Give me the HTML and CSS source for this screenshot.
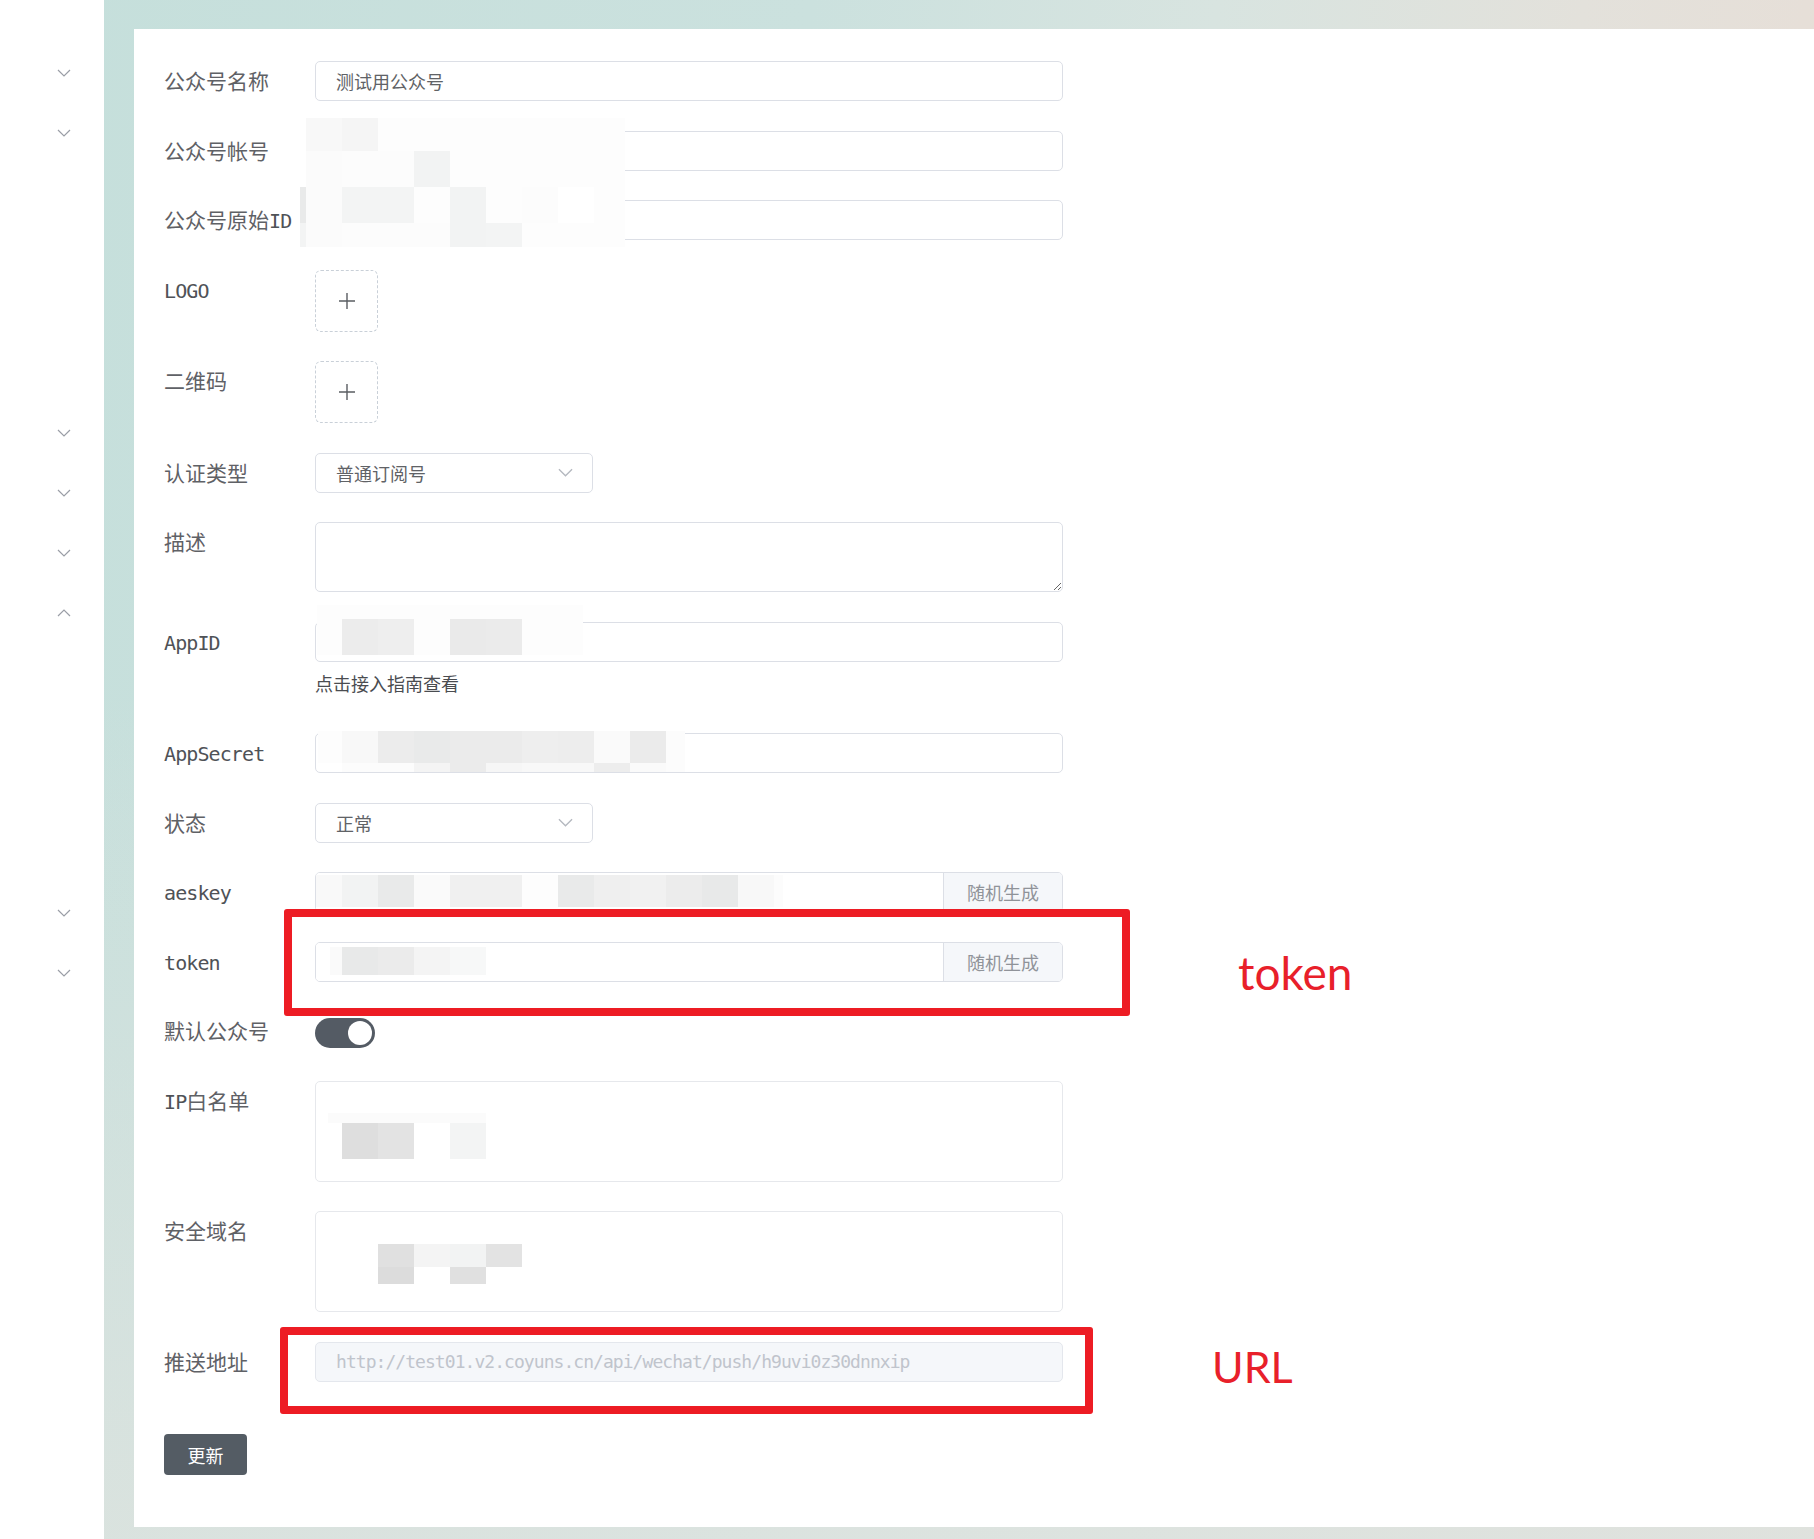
FILE: index.html
```html
<!DOCTYPE html>
<html lang="zh-CN">
<head>
<meta charset="utf-8">
<title>公众号设置</title>
<link rel="stylesheet" href="styles.css">
</head>
<body>
<div class="layout">
  <aside class="sidebar">
    <ul class="menu">
      <li class="menu-item"><svg class="caret" viewBox="0 0 14 8"><polyline points="1,1 7,7 13,1"/></svg></li>
      <li class="menu-item"><svg class="caret" viewBox="0 0 14 8"><polyline points="1,1 7,7 13,1"/></svg></li>
      <li class="menu-item"></li>
      <li class="menu-item"></li>
      <li class="menu-item"></li>
      <li class="menu-item"></li>
      <li class="menu-item"><svg class="caret" viewBox="0 0 14 8"><polyline points="1,1 7,7 13,1"/></svg></li>
      <li class="menu-item"><svg class="caret" viewBox="0 0 14 8"><polyline points="1,1 7,7 13,1"/></svg></li>
      <li class="menu-item"><svg class="caret" viewBox="0 0 14 8"><polyline points="1,1 7,7 13,1"/></svg></li>
      <li class="menu-item"><svg class="caret" viewBox="0 0 14 8"><polyline points="1,7 7,1 13,7"/></svg></li>
      <li class="menu-item"></li>
      <li class="menu-item"></li>
      <li class="menu-item"></li>
      <li class="menu-item"></li>
      <li class="menu-item"><svg class="caret" viewBox="0 0 14 8"><polyline points="1,1 7,7 13,1"/></svg></li>
      <li class="menu-item"><svg class="caret" viewBox="0 0 14 8"><polyline points="1,1 7,7 13,1"/></svg></li>
    </ul>
  </aside>

  <main class="main">
    <section class="card">
      <form class="form">
        <div class="form-row">
          <label class="form-label">公众号名称</label>
          <div class="form-field"><input class="input" type="text" value="测试用公众号"></div>
        </div>
        <div class="form-row">
          <label class="form-label">公众号帐号</label>
          <div class="form-field"><input class="input" type="text" value=""></div>
        </div>
        <div class="form-row">
          <label class="form-label">公众号原始<span class="mono">ID</span></label>
          <div class="form-field"><input class="input" type="text" value=""></div>
        </div>
        <div class="form-row">
          <label class="form-label"><span class="mono">LOGO</span></label>
          <div class="form-field">
            <div class="upload"><svg class="plus" viewBox="0 0 18 18"><path d="M9 1v16M1 9h16"/></svg></div>
          </div>
        </div>
        <div class="form-row">
          <label class="form-label">二维码</label>
          <div class="form-field">
            <div class="upload"><svg class="plus" viewBox="0 0 18 18"><path d="M9 1v16M1 9h16"/></svg></div>
          </div>
        </div>
        <div class="form-row">
          <label class="form-label">认证类型</label>
          <div class="form-field">
            <div class="select"><span>普通订阅号</span><svg class="select-arrow" viewBox="0 0 16 9"><polyline points="1,1 8,8 15,1"/></svg></div>
          </div>
        </div>
        <div class="form-row">
          <label class="form-label">描述</label>
          <div class="form-field"><textarea class="textarea"></textarea></div>
        </div>
        <div class="form-row">
          <label class="form-label"><span class="mono">AppID</span></label>
          <div class="form-field">
            <input class="input" type="text" value="">
            <div class="help">点击接入指南查看</div>
          </div>
        </div>
        <div class="form-row">
          <label class="form-label"><span class="mono">AppSecret</span></label>
          <div class="form-field"><input class="input" type="text" value=""></div>
        </div>
        <div class="form-row">
          <label class="form-label">状态</label>
          <div class="form-field">
            <div class="select"><span>正常</span><svg class="select-arrow" viewBox="0 0 16 9"><polyline points="1,1 8,8 15,1"/></svg></div>
          </div>
        </div>
        <div class="form-row">
          <label class="form-label"><span class="mono">aeskey</span></label>
          <div class="form-field">
            <div class="input-group"><input class="input-inner" type="text" value=""><span class="addon">随机生成</span></div>
          </div>
        </div>
        <div class="form-row">
          <label class="form-label"><span class="mono">token</span></label>
          <div class="form-field">
            <div class="input-group"><input class="input-inner" type="text" value=""><span class="addon">随机生成</span></div>
          </div>
        </div>
        <div class="form-row">
          <label class="form-label">默认公众号</label>
          <div class="form-field"><span class="switch is-on"></span></div>
        </div>
        <div class="form-row">
          <label class="form-label"><span class="mono">IP</span>白名单</label>
          <div class="form-field"><textarea class="textarea textarea-tall"></textarea></div>
        </div>
        <div class="form-row">
          <label class="form-label">安全域名</label>
          <div class="form-field"><textarea class="textarea textarea-tall"></textarea></div>
        </div>
        <div class="form-row">
          <label class="form-label">推送地址</label>
          <div class="form-field"><input class="input input-disabled" type="text" value="http://test01.v2.coyuns.cn/api/wechat/push/h9uvi0z30dnnxip" disabled></div>
        </div>
        <div class="form-actions">
          <button class="btn" type="button">更新</button>
        </div>
      </form>
    </section>
  </main>
</div>

<!-- pixelated (redacted) values -->
<div class="mz mz-account">
  <i></i><i class="g-f8"></i><i class="g-f5"></i><i class="g-fd"></i><i class="g-fd"></i><i class="g-fd"></i><i class="g-fd"></i><i class="g-fd"></i><i class="g-fd"></i><i class="g-fd"></i>
  <i></i><i class="g-fb"></i><i class="g-fc"></i><i class="g-fc"></i><i class="g-f2"></i><i class="g-fd"></i><i class="g-fd"></i><i class="g-fd"></i><i class="g-fd"></i><i class="g-fd"></i>
  <i class="g-e9"></i><i class="g-fb"></i><i class="g-f3"></i><i class="g-f3"></i><i class="g-fd"></i><i class="g-f2"></i><i class="g-fd"></i><i class="g-fc"></i><i class="g-ff"></i><i class="g-fd"></i>
  <i class="g-f3"></i><i class="g-fb"></i><i class="g-fc"></i><i class="g-fc"></i><i class="g-fc"></i><i class="g-f2"></i><i class="g-f3"></i><i class="g-fd"></i><i class="g-fd"></i><i class="g-fd"></i>
</div>
<div class="mz mz-appid">
  <i class="g-fd"></i><i class="g-fd"></i><i class="g-fd"></i><i class="g-fd"></i><i class="g-fd"></i><i class="g-fd"></i><i class="g-fd"></i><i class="g-fd"></i>
  <i class="g-fd"></i><i class="g-ec"></i><i class="g-ee"></i><i class="g-fd"></i><i class="g-ea"></i><i class="g-eb"></i><i class="g-fd"></i><i class="g-fd"></i>
</div>
<div class="mz mz-secret">
  <i class="g-fd"></i><i class="g-f8"></i><i class="g-ec"></i><i class="g-e9"></i><i class="g-eb"></i><i class="g-eb"></i><i class="g-ee"></i><i class="g-ed"></i><i class="g-fa"></i><i class="g-eb"></i><i class="g-fc"></i>
  <i></i><i class="g-fc"></i><i class="g-fc"></i><i class="g-f4"></i><i class="g-eb"></i><i class="g-f6"></i><i class="g-f8"></i><i class="g-f8"></i><i class="g-ed"></i><i class="g-fa"></i><i class="g-fc"></i>
</div>
<div class="mz mz-aeskey">
  <i class="g-f9"></i><i class="g-f2"></i><i class="g-e9"></i><i class="g-fa"></i><i class="g-f0"></i><i class="g-f0"></i><i class="g-fd"></i><i class="g-e9"></i><i class="g-ef"></i><i class="g-f1"></i><i class="g-ec"></i><i class="g-e8"></i><i class="g-f8"></i><i class="g-fc"></i>
</div>
<div class="mz mz-token">
  <i class="g-fa"></i><i class="g-e8"></i><i class="g-eb"></i><i class="g-f4"></i><i class="g-f7"></i>
</div>
<div class="mz mz-ip">
  <i class="g-fb"></i><i class="g-fb"></i><i class="g-fb"></i><i class="g-fb"></i><i class="g-fb"></i>
  <i></i><i class="g-de"></i><i class="g-e3"></i><i></i><i class="g-f3"></i>
</div>
<div class="mz mz-domain">
  <i class="g-e0"></i><i class="g-f4"></i><i class="g-f2"></i><i class="g-e3"></i>
  <i class="g-dc"></i><i></i><i class="g-e0"></i><i></i>
</div>

<!-- annotation marks -->
<div class="mark mark-token"></div>
<div class="mark mark-url"></div>
<div class="mark-label mark-label-token">token</div>
<div class="mark-label mark-label-url">URL</div>
</body>
</html>
```

FILE: styles.css
```css
* { box-sizing: border-box; }

html, body { margin: 0; padding: 0; }

body {
  position: relative;
  width: 1814px;
  height: 1539px;
  overflow: hidden;
  font-family: "Noto Sans CJK SC", sans-serif;
  color: #606266;
  background:
    linear-gradient(180deg, rgba(255,255,255,0) 45%, rgba(221,227,223,0.85) 100%),
    linear-gradient(98deg, #c5dfdb 0%, #cbe1de 40%, #d8e4e0 60%, #e3e1db 78%, #e9ddd5 100%);
}

.layout {
  display: flex;
  height: 1539px;
}

/* ---------- sidebar ---------- */
.sidebar {
  flex: none;
  width: 104px;
  background: #fff;
}

.menu {
  list-style: none;
  margin: 0;
  padding: 43px 0 0;
}

.menu-item {
  height: 60px;
  display: flex;
  align-items: center;
  padding-left: 57px;
}

.caret {
  width: 14px;
  height: 8px;
  fill: none;
  stroke: #9a9ea6;
  stroke-width: 1.2;
}

/* ---------- main ---------- */
.main {
  flex: 1;
  padding: 29px 0 12px 30px;
  display: flex;
}

.card {
  flex: 1;
  background: #fff;
  padding: 32px 30px 0;
}

.form-row {
  display: flex;
  margin-bottom: 29.5px;
}

.form-label {
  flex: none;
  width: 151px;
  height: 40px;
  line-height: 38px;
  font-size: 21px;
  color: #5f6166;
  white-space: nowrap;
}

.mono {
  font-family: "DejaVu Sans Mono", monospace;
  font-size: 20px;
  line-height: 1;
  letter-spacing: -0.9px;
  color: #4f5257;
}

.form-field {
  width: 748px;
  position: relative;
}

.input {
  display: block;
  width: 100%;
  height: 40px;
  border: 1px solid #dcdfe6;
  border-radius: 5px;
  padding: 0 20px;
  font-family: "Noto Sans CJK SC", sans-serif;
  font-size: 18px;
  color: #606266;
  background: #fff;
  outline: none;
}

.input-disabled {
  background: #f5f7fa;
  border-color: #e4e7ed;
  color: #c0c4cc;
  font-family: "DejaVu Sans Mono", monospace;
  letter-spacing: -0.95px;
  -webkit-text-fill-color: #c0c4cc;
  opacity: 1;
}

.help {
  line-height: 42px;
  font-size: 18px;
  color: #4a4c50;
}

/* upload tile */
.upload {
  width: 63px;
  height: 62px;
  border: 1px dashed #c9d0d8;
  border-radius: 6px;
  display: flex;
  align-items: center;
  justify-content: center;
}

.plus {
  width: 18px;
  height: 18px;
  fill: none;
  stroke: #5a5d62;
  stroke-width: 1.4;
}

/* select */
.select {
  width: 278px;
  height: 40px;
  border: 1px solid #dcdfe6;
  border-radius: 5px;
  display: flex;
  align-items: center;
  justify-content: space-between;
  padding: 0 19px 0 20px;
  font-size: 18px;
  color: #606266;
}

.select-arrow {
  width: 15px;
  height: 9px;
  fill: none;
  stroke: #b4b8bf;
  stroke-width: 1.4;
}

/* textarea */
.textarea {
  display: block;
  width: 100%;
  height: 70px;
  border: 1px solid #dcdfe6;
  border-radius: 5px;
  padding: 8px 20px;
  font-family: "Noto Sans CJK SC", sans-serif;
  font-size: 18px;
  color: #606266;
  resize: vertical;
  outline: none;
}

.textarea-tall {
  height: 101px;
  resize: none;
  border-color: #e6e8ec;
}

/* input with append button */
.input-group {
  display: flex;
  height: 40px;
  border: 1px solid #dcdfe6;
  border-radius: 5px;
  overflow: hidden;
}

.input-inner {
  flex: 1;
  min-width: 0;
  border: 0;
  padding: 0 20px;
  font-size: 18px;
  outline: none;
  background: #fff;
}

.addon {
  flex: none;
  width: 119px;
  background: #f5f7fa;
  border-left: 1px solid #dcdfe6;
  color: #909399;
  font-size: 18px;
  display: flex;
  align-items: center;
  justify-content: center;
}

/* switch */
.switch {
  display: block;
  position: relative;
  width: 60px;
  height: 30px;
  margin-top: 7px;
  border-radius: 15px;
  background: #545b64;
}

.switch.is-on::after {
  content: "";
  position: absolute;
  right: 3px;
  top: 3px;
  width: 24px;
  height: 24px;
  border-radius: 50%;
  background: #fff;
}

/* actions */
.form-actions {
  padding-top: 23px;
}

.btn {
  display: block;
  width: 83px;
  height: 41px;
  border: 0;
  border-radius: 4px;
  background: #545c64;
  color: #fff;
  font-family: "Noto Sans CJK SC", sans-serif;
  font-size: 18px;
  padding: 0;
}

/* ---------- pixelated values ---------- */
.mz {
  position: absolute;
  display: grid;
}

.mz > i { display: block; }

.mz-account {
  left: 300px; top: 118px;
  grid-template-columns: 6px repeat(8, 36px) 31px;
  grid-template-rows: 33px 36px 36px 24px;
}

.mz-appid {
  left: 317px; top: 605px;
  grid-template-columns: 25px repeat(6, 36px) 25px;
  grid-template-rows: 14px 36px;
}

.mz-secret {
  left: 318px; top: 731px;
  grid-template-columns: 24px repeat(9, 36px) 19px;
  grid-template-rows: 32px 9px;
}

.mz-aeskey {
  left: 316px; top: 875px;
  grid-template-columns: 26px repeat(12, 36px) 9px;
  grid-template-rows: 32px;
}

.mz-token {
  left: 330px; top: 947px;
  grid-template-columns: 12px repeat(4, 36px);
  grid-template-rows: 28px;
}

.mz-ip {
  left: 328px; top: 1113px;
  grid-template-columns: 14px repeat(4, 36px);
  grid-template-rows: 10px 36px;
}

.mz-domain {
  left: 378px; top: 1244px;
  grid-template-columns: repeat(4, 36px);
  grid-template-rows: 23px 17px;
}

.g-ff { background: #ffffff; }
.g-fd { background: #fdfdfd; }
.g-fc { background: #fcfcfc; }
.g-fb { background: #fbfbfb; }
.g-fa { background: #fafafa; }
.g-f9 { background: #f9f9f9; }
.g-f8 { background: #f8f8f8; }
.g-f7 { background: #f7f8f8; }
.g-f6 { background: #f6f6f6; }
.g-f5 { background: #f5f5f5; }
.g-f4 { background: #f4f4f4; }
.g-f3 { background: #f3f4f4; }
.g-f2 { background: #f2f3f3; }
.g-f1 { background: #f1f1f1; }
.g-f0 { background: #f0f0f0; }
.g-ef { background: #efefef; }
.g-ee { background: #eeeeee; }
.g-ed { background: #ededed; }
.g-ec { background: #ececec; }
.g-eb { background: #ebebeb; }
.g-ea { background: #eaeaea; }
.g-e9 { background: #e9eaea; }
.g-e8 { background: #e8e9e9; }
.g-e3 { background: #e3e3e3; }
.g-e0 { background: #e0e0e0; }
.g-de { background: #dedede; }
.g-dc { background: #dcdcdc; }

/* ---------- red annotation marks ---------- */
.mark {
  position: absolute;
  border: 8px solid #ed1c24;
  border-radius: 3px;
}

.mark-token {
  left: 284px; top: 909px;
  width: 846px; height: 107px;
}

.mark-url {
  left: 280px; top: 1327px;
  width: 813px; height: 87px;
}

.mark-label {
  position: absolute;
  font-family: Lato, "Open Sans", sans-serif;
  font-size: 46px;
  line-height: 1;
  color: #e8202a;
}

.mark-label-token { left: 1238px; top: 950px; }
.mark-label-url { left: 1212px; top: 1345px; font-size: 43px; }
```
